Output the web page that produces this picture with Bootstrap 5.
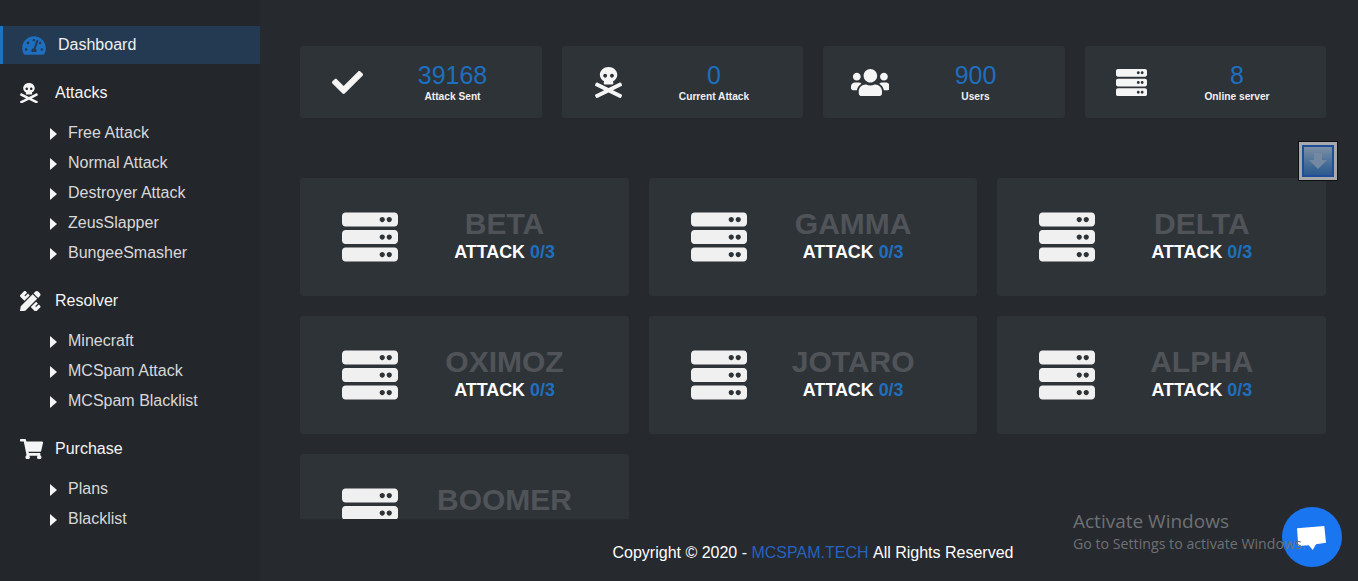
<!DOCTYPE html>
<html lang="en">
<head>
<meta charset="utf-8">
<title>MCSpam Dashboard</title>
<link href="https://cdn.jsdelivr.net/npm/bootstrap@5.3.0/dist/css/bootstrap.min.css" rel="stylesheet">
<style>
html,body{height:100%;overflow:hidden}
body{background:#26292e;font-family:"Liberation Sans",Arial,sans-serif;color:#fff}
.shell{height:581px;position:relative}
.side{width:260px;flex:none;background:#23262b;padding-top:26px}
.side-active{height:38px;background:#233a52;border-left:3px solid #1e73be;padding-left:19px;font-size:16px;color:#f0f0f0;text-decoration:none}
.side-active svg{width:24px;height:21px;fill:#1e6fbf;margin-right:12px}
.side-group{margin-top:18px}
.side-group.first{margin-top:14px}
.side-head{height:30px;padding-left:20px;font-size:16px;color:#f5f5f5;margin-bottom:10px}
.side-ico{width:35px;flex:none;display:flex}
.side-ico svg{height:20.5px;fill:#f5f5f5}
.side-sub{height:30px;padding-left:50px;font-size:16px;color:#d9d9d9}
.side-sub::before{content:"";width:0;height:0;border-style:solid;border-width:6.5px 0 6.5px 7px;border-color:transparent transparent transparent #f5f5f5;margin-right:11px;margin-top:2px}
.main-col{min-width:0}
.scroller{height:519px;overflow:hidden;padding:46px 32px 0 40px}
.stat-grid{display:grid;grid-template-columns:repeat(4,1fr);gap:20px;margin-bottom:60px}
.stat-box{height:72px;background:#2e3338;border-radius:3px;display:grid;grid-template-columns:94px 117px;align-items:center;justify-items:center}
.stat-box svg{height:31px;fill:#f5f5f5}
.stat-num{font-size:25px;line-height:28px;color:#1e6fbf}
.stat-lbl{font-size:10.2px;line-height:14px;font-weight:700;color:#f0f0f0;padding-top:1px}
.srv-grid{display:grid;grid-template-columns:repeat(3,1fr);gap:20px}
.srv-box{height:118px;background:#2e3338;border-radius:3px;display:grid;grid-template-columns:140px 129px;align-items:center;justify-items:center}
.srv-box svg{width:56px;height:56px;fill:#f0f0f0}
.srv-text{padding-bottom:6px}
.srv-name{font-size:30px;line-height:34px;font-weight:700;color:#505459;white-space:nowrap}
.srv-atk{font-size:17.9px;line-height:20px;font-weight:700;color:#fff;white-space:nowrap;margin-top:1px}
.srv-atk span{color:#1e6fbf}
.foot{height:62px;padding:6px 32px 0 40px;font-size:16px;color:#fff}
.foot span{color:#2563c0}
.up-btn{position:absolute;left:1298px;top:141px;width:40px;height:40px;border:1px solid #0d0f12;background:#a8a9ab;padding:3px}
.up-btn div{height:100%;border:2px solid #1f4d9a;background:linear-gradient(#7c8fa4,#3f6894 70%,#2d5a8f);display:flex;align-items:center;justify-content:center}
.up-btn svg{width:18px;height:18px;fill:#7489a1}
.wm{position:absolute;left:1073px;top:509px;font-family:"Open Sans",sans-serif;color:#6e7174;white-space:nowrap}
.wm-t{font-size:19px;line-height:25px}
.wm-s{font-size:14.2px;line-height:20px}
.chat{position:absolute;left:1282px;top:507px;width:60px;height:60px;border-radius:50%;background:#1a75f0}
.chat svg{width:60px;height:60px;fill:#fff;display:block}
</style>
</head>
<body>
<svg width="0" height="0" class="position-absolute">
<defs>
<symbol id="i-server" viewBox="0 0 512 512"><path d="M480 160H32c-17.673 0-32-14.327-32-32V64c0-17.673 14.327-32 32-32h448c17.673 0 32 14.327 32 32v64c0 17.673-14.327 32-32 32zm-48-88c-13.255 0-24 10.745-24 24s10.745 24 24 24 24-10.745 24-24-10.745-24-24-24zm-64 0c-13.255 0-24 10.745-24 24s10.745 24 24 24 24-10.745 24-24-10.745-24-24-24zm112 248H32c-17.673 0-32-14.327-32-32v-64c0-17.673 14.327-32 32-32h448c17.673 0 32 14.327 32 32v64c0 17.673-14.327 32-32 32zm-48-88c-13.255 0-24 10.745-24 24s10.745 24 24 24 24-10.745 24-24-10.745-24-24-24zm-64 0c-13.255 0-24 10.745-24 24s10.745 24 24 24 24-10.745 24-24-10.745-24-24-24zm112 248H32c-17.673 0-32-14.327-32-32v-64c0-17.673 14.327-32 32-32h448c17.673 0 32 14.327 32 32v64c0 17.673-14.327 32-32 32zm-48-88c-13.255 0-24 10.745-24 24s10.745 24 24 24 24-10.745 24-24-10.745-24-24-24zm-64 0c-13.255 0-24 10.745-24 24s10.745 24 24 24 24-10.745 24-24-10.745-24-24-24z"/></symbol>
<symbol id="i-skull" viewBox="0 0 448 512"><path d="M439.15 453.06L297.17 384l141.99-69.06c7.9-3.95 11.11-13.56 7.15-21.46L432 264.85c-3.95-7.9-13.56-11.11-21.47-7.16L224 348.41 37.47 257.69c-7.9-3.95-17.51-.75-21.47 7.16L1.69 293.48c-3.95 7.9-.75 17.51 7.15 21.46L150.83 384 8.85 453.06c-7.9 3.95-11.11 13.56-7.15 21.47l14.31 28.63c3.95 7.9 13.56 11.11 21.47 7.15L224 419.59l186.53 90.72c7.9 3.95 17.51.75 21.47-7.15l14.31-28.63c3.95-7.91.74-17.52-7.16-21.47zM150 237.28l-5.48 25.87c-2.67 12.62 5.42 24.85 16.45 24.85h126.08c11.03 0 19.12-12.23 16.45-24.85l-5.5-25.87c41.78-22.41 70-62.75 70-109.28C368 57.31 303.53 0 224 0S80 57.31 80 128c0 46.53 28.22 86.87 70 109.28zM280 112c17.65 0 32 14.35 32 32s-14.35 32-32 32-32-14.35-32-32 14.35-32 32-32zm-112 0c17.65 0 32 14.35 32 32s-14.35 32-32 32-32-14.35-32-32 14.35-32 32-32z"/></symbol>
</defs>
</svg>
<div class="shell d-flex">
  <aside class="side">
    <a class="side-active d-flex align-items-center" href="#">
      <svg viewBox="0 0 576 512"><path d="M288 32C128.94 32 0 160.94 0 320c0 52.8 14.25 102.26 39.06 144.8 5.61 9.62 16.3 15.2 27.44 15.2h443c11.14 0 21.83-5.58 27.44-15.2C561.75 422.26 576 372.8 576 320c0-159.06-128.94-288-288-288zm0 64c14.71 0 26.58 10.13 30.32 23.65-1.11 2.26-2.64 4.23-3.45 6.67l-9.22 27.67c-5.13 3.49-10.97 6.01-17.64 6.01-17.67 0-32-14.33-32-32S270.33 96 288 96zM96 384c-17.67 0-32-14.33-32-32s14.33-32 32-32 32 14.33 32 32-14.33 32-32 32zm48-160c-17.67 0-32-14.33-32-32s14.33-32 32-32 32 14.33 32 32-14.33 32-32 32zm246.77-72.41l-61.33 184C343.13 347.33 352 364.54 352 384c0 11.72-3.38 22.55-8.88 32H232.88c-5.5-9.45-8.88-20.28-8.88-32 0-33.94 26.5-61.43 59.9-63.59l61.34-184.01c4.17-12.56 17.73-19.45 30.36-15.17 12.57 4.19 19.35 17.79 15.17 30.36zm14.66 57.2l15.52-46.55c3.47-1.29 7.13-2.23 11.05-2.23 17.67 0 32 14.33 32 32s-14.33 32-32 32c-11.38-.01-20.89-6.28-26.57-15.22zM480 384c-17.67 0-32-14.33-32-32s14.33-32 32-32 32 14.33 32 32-14.33 32-32 32z"/></svg>
      Dashboard
    </a>
    <div class="side-group first">
      <div class="side-head d-flex align-items-center"><span class="side-ico"><svg viewBox="0 0 448 512"><use href="#i-skull"/></svg></span>Attacks</div>
      <ul class="list-unstyled mb-0">
        <li class="side-sub d-flex align-items-center">Free Attack</li>
        <li class="side-sub d-flex align-items-center">Normal Attack</li>
        <li class="side-sub d-flex align-items-center">Destroyer Attack</li>
        <li class="side-sub d-flex align-items-center">ZeusSlapper</li>
        <li class="side-sub d-flex align-items-center">BungeeSmasher</li>
      </ul>
    </div>
    <div class="side-group">
      <div class="side-head d-flex align-items-center"><span class="side-ico"><svg viewBox="0 0 512 512"><path d="M109.46 244.04l134.58-134.56-44.12-44.12-61.68 61.68a7.919 7.919 0 0 1-11.21 0l-11.21-11.21c-3.1-3.1-3.1-8.12 0-11.21l61.68-61.68-33.64-33.65C131.47-3.1 111.39-3.1 99 9.29L9.29 99c-12.38 12.39-12.39 32.47 0 44.86l100.17 100.18zm388.47-116.8c18.76-18.76 18.75-49.17 0-67.93l-45.25-45.25c-18.76-18.76-49.18-18.76-67.95 0l-46.02 46.01 113.2 113.2 46.02-46.03zM316.08 82.71l-297 296.96L.32 487.11c-2.53 14.49 10.09 27.11 24.59 24.56l107.45-18.84L429.28 195.9 316.08 82.71zm186.63 285.43l-33.64-33.64-61.68 61.68c-3.1 3.1-8.12 3.1-11.21 0l-11.21-11.21c-3.09-3.1-3.09-8.12 0-11.21l61.68-61.68-44.14-44.14L267.93 402.5l100.21 100.2c12.39 12.39 32.47 12.39 44.86 0l89.71-89.7c12.39-12.39 12.39-32.47 0-44.86z"/></svg></span>Resolver</div>
      <ul class="list-unstyled mb-0">
        <li class="side-sub d-flex align-items-center">Minecraft</li>
        <li class="side-sub d-flex align-items-center">MCSpam Attack</li>
        <li class="side-sub d-flex align-items-center">MCSpam Blacklist</li>
      </ul>
    </div>
    <div class="side-group">
      <div class="side-head d-flex align-items-center"><span class="side-ico"><svg viewBox="0 0 576 512"><path d="M528.12 301.319l47.273-208C578.806 78.301 567.391 64 551.99 64H159.208l-9.166-44.81C147.758 8.021 137.93 0 126.529 0H24C10.745 0 0 10.745 0 24v16c0 13.255 10.745 24 24 24h69.883l70.248 343.435C147.325 417.1 136 435.222 136 456c0 30.928 25.072 56 56 56s56-25.072 56-56c0-15.674-6.447-29.835-16.824-40h209.647C430.447 426.165 424 440.326 424 456c0 30.928 25.072 56 56 56s56-25.072 56-56c0-22.172-12.888-41.332-31.579-50.405l5.517-24.276c3.413-15.018-8.002-29.319-23.403-29.319H218.117l-6.545-32h293.145c11.206 0 20.92-7.754 23.403-18.681z"/></svg></span>Purchase</div>
      <ul class="list-unstyled mb-0">
        <li class="side-sub d-flex align-items-center">Plans</li>
        <li class="side-sub d-flex align-items-center">Blacklist</li>
      </ul>
    </div>
  </aside>
  <div class="main-col flex-grow-1 d-flex flex-column">
    <div class="scroller">
      <div class="stat-grid">
        <div class="stat-box"><svg viewBox="0 0 512 512"><path d="M173.898 439.404l-166.4-166.4c-9.997-9.997-9.997-26.206 0-36.204l36.203-36.204c9.997-9.998 26.207-9.998 36.204 0L192 312.69 432.095 72.596c9.997-9.997 26.207-9.997 36.204 0l36.203 36.204c9.997 9.997 9.997 26.206 0 36.204l-294.4 294.401c-9.998 9.997-26.207 9.997-36.204-.001z"/></svg><div class="text-center"><div class="stat-num">39168</div><div class="stat-lbl">Attack Sent</div></div></div>
        <div class="stat-box"><svg viewBox="0 0 448 512"><use href="#i-skull"/></svg><div class="text-center"><div class="stat-num">0</div><div class="stat-lbl">Current Attack</div></div></div>
        <div class="stat-box"><svg viewBox="0 0 640 512"><path d="M96 224c35.3 0 64-28.7 64-64s-28.7-64-64-64-64 28.7-64 64 28.7 64 64 64zm448 0c35.3 0 64-28.7 64-64s-28.7-64-64-64-64 28.7-64 64 28.7 64 64 64zm32 32h-64c-17.6 0-33.5 7.1-45.1 18.6 40.3 22.1 68.9 62 75.1 109.4h66c17.7 0 32-14.3 32-32v-32c0-35.3-28.7-64-64-64zm-256 0c61.9 0 112-50.1 112-112S381.9 32 320 32 208 82.1 208 144s50.1 112 112 112zm76.8 32h-8.3c-20.8 10-43.9 16-68.5 16s-47.6-6-68.5-16h-8.3C179.6 288 128 339.6 128 403.2V432c0 26.5 21.5 48 48 48h288c26.5 0 48-21.5 48-48v-28.8c0-63.6-51.6-115.2-115.2-115.2zm-223.7-13.4C161.5 263.1 145.6 256 128 256H64c-35.3 0-64 28.7-64 64v32c0 17.7 14.3 32 32 32h65.9c6.3-47.4 34.9-87.3 75.2-109.4z"/></svg><div class="text-center"><div class="stat-num">900</div><div class="stat-lbl">Users</div></div></div>
        <div class="stat-box"><svg viewBox="0 0 512 512"><use href="#i-server"/></svg><div class="text-center"><div class="stat-num">8</div><div class="stat-lbl">Online server</div></div></div>
      </div>
      <div class="srv-grid">
        <div class="srv-box"><svg><use href="#i-server"/></svg><div class="text-center srv-text"><div class="srv-name">BETA</div><div class="srv-atk">ATTACK <span>0/3</span></div></div></div>
        <div class="srv-box"><svg><use href="#i-server"/></svg><div class="text-center srv-text"><div class="srv-name">GAMMA</div><div class="srv-atk">ATTACK <span>0/3</span></div></div></div>
        <div class="srv-box"><svg><use href="#i-server"/></svg><div class="text-center srv-text"><div class="srv-name">DELTA</div><div class="srv-atk">ATTACK <span>0/3</span></div></div></div>
        <div class="srv-box"><svg><use href="#i-server"/></svg><div class="text-center srv-text"><div class="srv-name">OXIMOZ</div><div class="srv-atk">ATTACK <span>0/3</span></div></div></div>
        <div class="srv-box"><svg><use href="#i-server"/></svg><div class="text-center srv-text"><div class="srv-name">JOTARO</div><div class="srv-atk">ATTACK <span>0/3</span></div></div></div>
        <div class="srv-box"><svg><use href="#i-server"/></svg><div class="text-center srv-text"><div class="srv-name">ALPHA</div><div class="srv-atk">ATTACK <span>0/3</span></div></div></div>
        <div class="srv-box"><svg><use href="#i-server"/></svg><div class="text-center srv-text"><div class="srv-name">BOOMER</div><div class="srv-atk">ATTACK <span>0/3</span></div></div></div>
      </div>
    </div>
    <footer class="foot d-flex align-items-center justify-content-center">Copyright © 2020 -&nbsp;<span>MCSPAM.TECH</span>&nbsp;All Rights Reserved</footer>
  </div>
  <div class="up-btn"><div><svg viewBox="0 0 18 18"><path d="M5 1h8v7h5l-9 9-9-9h5z"/></svg></div></div>
  <div class="chat"><svg viewBox="0 0 60 60"><path d="M15 21.3 L42.3 19 L44 35.7 L34 37.3 L30.7 43 L26.7 38.3 L16.3 39 Z"/></svg></div>
  <div class="wm"><div class="wm-t">Activate Windows</div><div class="wm-s">Go to Settings to activate Windows.</div></div>
</div>
</body>
</html>
